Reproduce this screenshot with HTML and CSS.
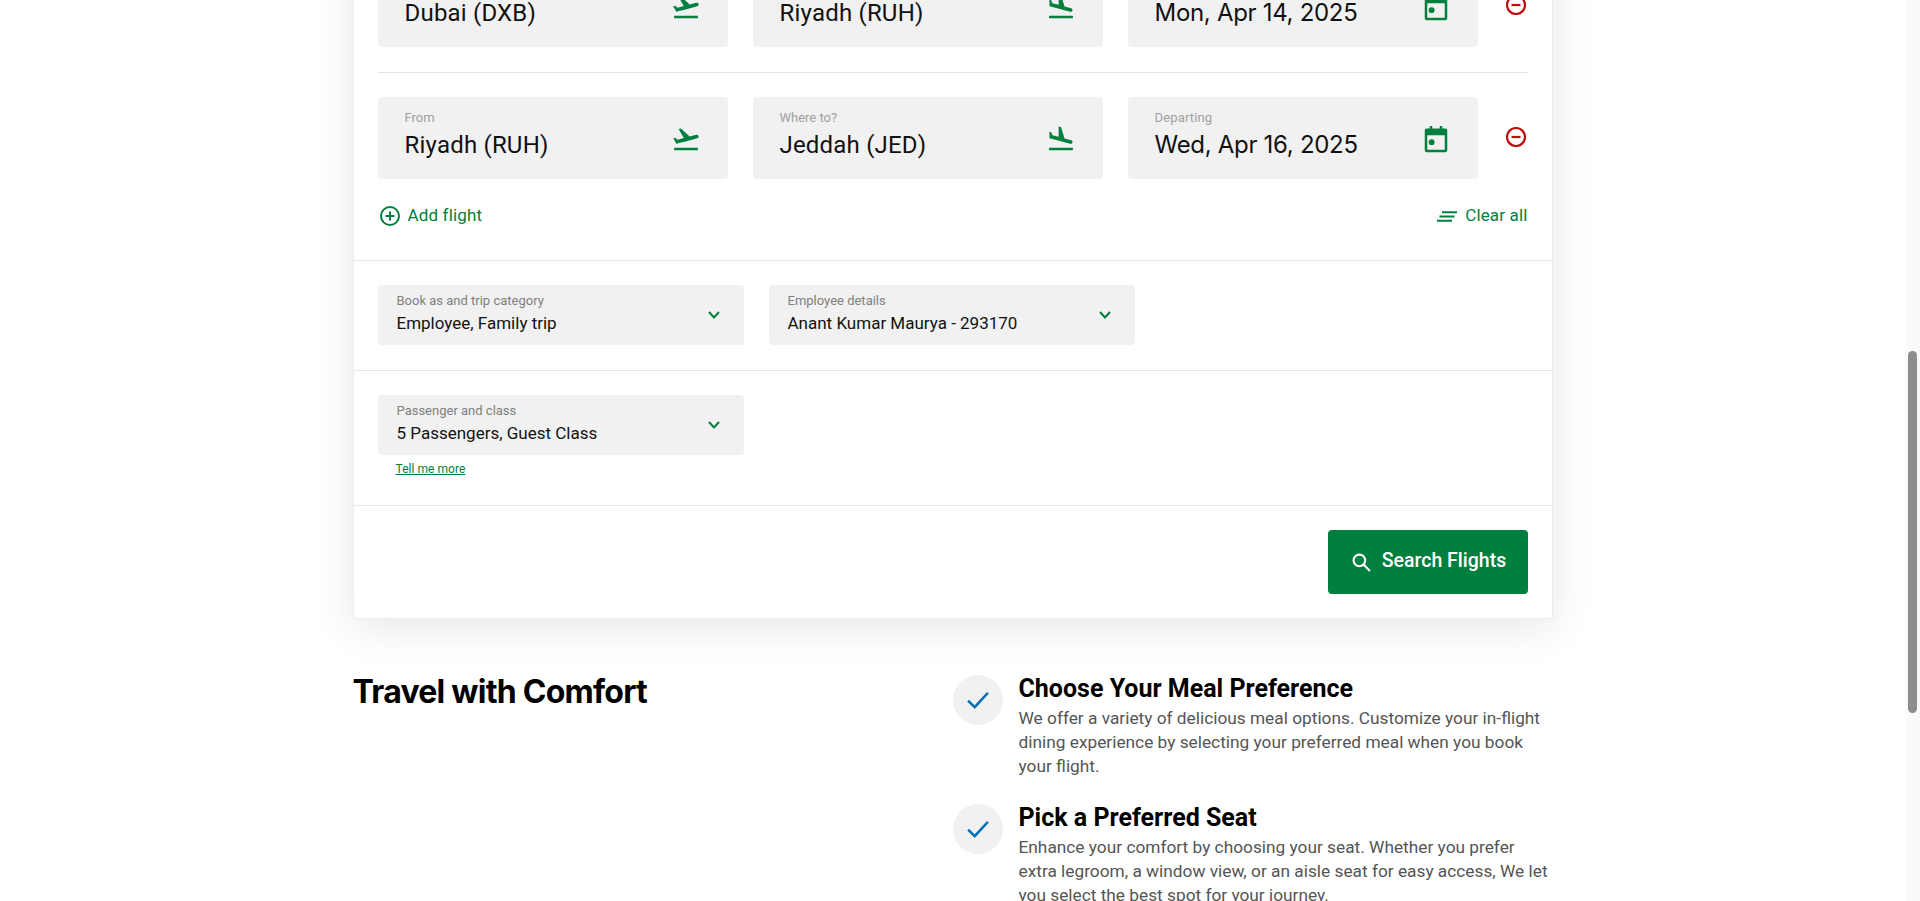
FILE: index.html
```html
<!DOCTYPE html>
<html lang="en">
<head>
    <meta charset="UTF-8">
    <meta name="viewport" content="width=device-width, initial-scale=1.0">
    <title>Book a flight</title>
    <link rel="stylesheet" href="styles.css">
</head>
<body>
    <div class="page">
        <main class="main">
            <div class="container">
                <form class="card">
                    <section class="routes">
                        <div class="route">
                            <div class="field">
                                <div class="field-text"><span class="field-label">From</span><span class="field-value">Dubai (DXB)</span></div>
                                <svg class="icon-plane" viewBox="0 0 24 24"><path d="M2.5 19h19v2h-19v-2zm19.57-9.36c-.21-.8-1.04-1.28-1.84-1.06L14.92 10l-6.9-6.43-1.93.51 4.14 7.17-4.97 1.33-1.97-1.54-1.45.39 2.59 4.49s7.12-1.9 16.57-4.43c.81-.23 1.28-1.05 1.07-1.85z"/></svg>
                            </div>
                            <div class="field">
                                <div class="field-text"><span class="field-label">Where to?</span><span class="field-value">Riyadh (RUH)</span></div>
                                <svg class="icon-plane" viewBox="0 0 24 24"><path d="M2.5 19h19v2h-19v-2zm7.18-5.73l4.35 1.16 5.31 1.42c.8.21 1.62-.26 1.84-1.06.21-.8-.26-1.62-1.06-1.84l-5.31-1.42-2.76-9.02L10.12 2v8.28L5.15 8.95l-.93-2.32-1.45-.39v5.17l1.6.43 5.31 1.43z"/></svg>
                            </div>
                            <div class="field">
                                <div class="field-text"><span class="field-label date-label">Departing</span><span class="field-value date-value">Mon, Apr 14, 2025</span></div>
                                <svg class="icon-plane" viewBox="0 0 24 24"><path d="M7 1.5h2V3.5h6V1.500h2V3.500h2.500A1.500 1.500 0 0 1 21 5v16a1.500 1.500 0 0 1-1.500 1.500h-15A1.500 1.500 0 0 1 3 21V5a1.500 1.500 0 0 1 1.500-1.500H7zM5 9v11.500h14V9z"/><circle cx="8.500" cy="14.500" r="2.300"/></svg>
                            </div>
                            <button type="button" class="remove"><svg viewBox="0 0 20 20"><circle cx="10" cy="10" r="9"/><path d="M5.500 10h9"/></svg></button>
                        </div>
                        <div class="route">
                            <div class="field">
                                <div class="field-text"><span class="field-label">From</span><span class="field-value">Riyadh (RUH)</span></div>
                                <svg class="icon-plane" viewBox="0 0 24 24"><path d="M2.5 19h19v2h-19v-2zm19.57-9.36c-.21-.8-1.04-1.28-1.84-1.06L14.92 10l-6.9-6.43-1.93.51 4.14 7.17-4.97 1.33-1.97-1.54-1.45.39 2.59 4.49s7.12-1.9 16.57-4.43c.81-.23 1.28-1.05 1.07-1.85z"/></svg>
                            </div>
                            <div class="field">
                                <div class="field-text"><span class="field-label">Where to?</span><span class="field-value">Jeddah (JED)</span></div>
                                <svg class="icon-plane" viewBox="0 0 24 24"><path d="M2.5 19h19v2h-19v-2zm7.18-5.73l4.35 1.16 5.31 1.42c.8.21 1.62-.26 1.84-1.06.21-.8-.26-1.62-1.06-1.84l-5.31-1.42-2.76-9.02L10.12 2v8.28L5.15 8.95l-.93-2.32-1.45-.39v5.17l1.6.43 5.31 1.43z"/></svg>
                            </div>
                            <div class="field">
                                <div class="field-text"><span class="field-label date-label">Departing</span><span class="field-value date-value">Wed, Apr 16, 2025</span></div>
                                <svg class="icon-plane" viewBox="0 0 24 24"><path d="M7 1.5h2V3.5h6V1.500h2V3.500h2.500A1.500 1.500 0 0 1 21 5v16a1.500 1.500 0 0 1-1.500 1.500h-15A1.500 1.500 0 0 1 3 21V5a1.500 1.500 0 0 1 1.500-1.500H7zM5 9v11.500h14V9z"/><circle cx="8.500" cy="14.500" r="2.300"/></svg>
                            </div>
                            <button type="button" class="remove"><svg viewBox="0 0 20 20"><circle cx="10" cy="10" r="9"/><path d="M5.500 10h9"/></svg></button>
                        </div>
                        <div class="route-actions">
                            <a class="action add-flight"><svg viewBox="0 0 20 20"><circle cx="10" cy="10" r="9"/><path d="M5.500 10h9M10 5.500v9"/></svg><span>Add flight</span></a>
                            <a class="action clear-all"><svg viewBox="0 0 20 11"><path d="M5 1.200h15M2.500 5.500h15M0 9.800h15"/></svg><span>Clear all</span></a>
                        </div>
                    </section>

                    <section class="options">
                        <div class="select">
                            <div class="field-text"><span class="select-label">Book as and trip category</span><span class="select-value">Employee, Family trip</span></div>
                            <svg class="chevron" viewBox="0 0 12 8"><path d="M1 1l5 5.500 5-5.500"/></svg>
                        </div>
                        <div class="select">
                            <div class="field-text"><span class="select-label">Employee details</span><span class="select-value">Anant Kumar Maurya - 293170</span></div>
                            <svg class="chevron" viewBox="0 0 12 8"><path d="M1 1l5 5.500 5-5.500"/></svg>
                        </div>
                    </section>

                    <section class="options passengers">
                        <div class="select">
                            <div class="field-text"><span class="select-label">Passenger and class</span><span class="select-value">5 Passengers, Guest Class</span></div>
                            <svg class="chevron" viewBox="0 0 12 8"><path d="M1 1l5 5.500 5-5.500"/></svg>
                        </div>
                        <a class="tell-more">Tell me more</a>
                    </section>

                    <section class="submit-row">
                        <button type="button" class="search-btn"><svg viewBox="0 0 18 18"><circle cx="7" cy="7" r="5.500"/><path d="M11 11l6 6"/></svg><span>Search Flights</span></button>
                    </section>
                </form>

                <section class="comfort">
                    <h2>Travel with Comfort</h2>
                    <div class="benefits">
                        <div class="benefit">
                            <span class="tick"><svg viewBox="0 0 20 16"><path d="M1 8.500l6 6L19 1.500"/></svg></span>
                            <div>
                                <h3>Choose Your Meal Preference</h3>
                                <p>We offer a variety of delicious meal options. Customize your in-flight dining experience by selecting your preferred meal when you book your flight.</p>
                            </div>
                        </div>
                        <div class="benefit">
                            <span class="tick"><svg viewBox="0 0 20 16"><path d="M1 8.500l6 6L19 1.500"/></svg></span>
                            <div>
                                <h3>Pick a Preferred Seat</h3>
                                <p>Enhance your comfort by choosing your seat. Whether you prefer extra legroom, a window view, or an aisle seat for easy access, We let you select the best spot for your journey.</p>
                            </div>
                        </div>
                    </div>
                </section>
            </div>
        </main>
        <div class="scrollbar"><div class="scrollbar-thumb"></div></div>
    </div>
</body>
</html>
```

FILE: styles.css
```css
* {
    box-sizing: border-box;
}
body {
    font-family: Roboto, Arial, sans-serif;
    margin: 0;
    background-color: white;
    color: #111;
}
.page {
    display: flex;
    height: 901px;
    overflow: hidden;
}
.main {
    flex: 1;
    min-width: 0;
}
.container {
    width: 1200px;
    margin: -60px auto 0;
}
.card {
    background: white;
    border: 1px solid #ececec;
    box-shadow: 0 8px 40px rgba(0, 0, 0, 0.1);
}
.routes {
    padding: 24px 24px 0;
}
.route {
    display: flex;
    align-items: center;
    gap: 25px;
    padding-bottom: 25px;
    margin-bottom: 24px;
    border-bottom: 1px solid #e5e5e5;
}
.route:nth-child(2) {
    border-bottom: none;
    padding-bottom: 0;
    margin-bottom: 0;
}
.field {
    width: 350px;
    height: 82px;
    display: flex;
    align-items: center;
    justify-content: space-between;
    padding: 0 27px;
    background-color: #f1f1f1;
    border-radius: 4px;
    color: #007f3e;
}
.field-text {
    display: flex;
    flex-direction: column;
}
.field .field-text {
    padding-bottom: 5px;
}
.field-label {
    font-size: 13px;
    line-height: 14px;
    color: #a0a0a0;
}
.field-value {
    font-size: 24px;
    line-height: 30px;
    margin-top: 5px;
    color: #111;
    letter-spacing: 0.2px;
}
.date-label {
    letter-spacing: 0.15px;
}
.date-value {
    font-family: Inter, Arial, sans-serif;
    font-size: 24px;
    letter-spacing: -0.3px;
}
.icon-plane {
    width: 30px;
    height: 30px;
    fill: #007f3e;
    flex: none;
    margin-top: 2px;
}
.remove {
    width: 25px;
    height: 20px;
    margin-left: auto;
    margin-top: -2px;
    padding: 0;
    border: none;
    background: none;
    display: flex;
    justify-content: flex-end;
}
.remove svg {
    width: 20px;
    height: 20px;
    margin-right: 2px;
    fill: none;
    stroke: #c00d0d;
    stroke-width: 2.2;
}
.route-actions {
    display: flex;
    justify-content: space-between;
    align-items: center;
    height: 24px;
    margin-top: 25px;
    margin-bottom: 32px;
}
.action {
    display: flex;
    align-items: center;
    font-size: 17px;
    letter-spacing: 0.15px;
    color: #007f3e;
}
.action span {
    padding-bottom: 2px;
}
.add-flight svg {
    width: 20px;
    height: 20px;
    margin: 0 8px 0 2px;
    fill: none;
    stroke: #007f3e;
    stroke-width: 2;
}
.clear-all svg {
    width: 20px;
    height: 11px;
    margin-right: 8px;
    fill: none;
    stroke: #007f3e;
    stroke-width: 2;
}
.options {
    display: flex;
    flex-wrap: wrap;
    gap: 25px;
    padding: 24px 24px 25px;
    border-top: 1px solid #e5e5e5;
}
.select {
    width: 366px;
    height: 60px;
    display: flex;
    align-items: center;
    justify-content: space-between;
    padding: 0 24px 0 19px;
    background-color: #f1f1f1;
    border-radius: 4px;
}
.select .field-text {
    padding-bottom: 3px;
}
.select-label {
    font-size: 13px;
    line-height: 14px;
    color: #808080;
}
.select-value {
    font-size: 17px;
    line-height: 20px;
    margin-top: 5px;
}
.chevron {
    width: 12px;
    height: 8px;
    margin-top: -1px;
    fill: none;
    stroke: #007f3e;
    stroke-width: 2;
}
.passengers {
    flex-direction: column;
    gap: 3px;
    padding-bottom: 25px;
}
.tell-more {
    margin-left: 18px;
    font-size: 12px;
    line-height: 22px;
    letter-spacing: 0.05px;
    color: #007f3e;
    text-decoration: underline;
}
.submit-row {
    display: flex;
    justify-content: flex-end;
    padding: 24px;
    border-top: 1px solid #e5e5e5;
}
.search-btn {
    width: 200px;
    height: 64px;
    display: flex;
    align-items: center;
    justify-content: center;
    gap: 11px;
    padding: 0 0 0 3px;
    background-color: #007f3e;
    color: white;
    border: none;
    border-radius: 4px;
    font-family: inherit;
    font-size: 19.5px;
    font-weight: 500;
}
.search-btn span {
    padding-bottom: 4px;
}
.search-btn svg {
    width: 19px;
    height: 19px;
    fill: none;
    stroke: white;
    stroke-width: 2;
}
.comfort {
    display: grid;
    grid-template-columns: 600px 600px;
    margin-top: 56px;
}
.comfort h2 {
    margin: 0;
    font-family: Inter, Arial, sans-serif;
    font-size: 32px;
    line-height: 33px;
    font-weight: 700;
    letter-spacing: -0.75px;
    color: #000;
}
.benefits {
    display: flex;
    flex-direction: column;
    gap: 26px;
}
.benefit {
    display: flex;
    gap: 16px;
}
.tick {
    width: 50px;
    height: 50px;
    flex: none;
    display: flex;
    align-items: center;
    justify-content: center;
    background-color: #f1f1f1;
    border-radius: 50%;
}
.tick svg {
    width: 22px;
    height: 18px;
    fill: none;
    stroke: #0072b5;
    stroke-width: 2.3;
}
.benefit h3 {
    margin: 0;
    font-size: 25px;
    line-height: 28px;
    font-weight: 700;
    color: #000;
}
.benefit p {
    margin: 3px 0 0;
    font-size: 17.3px;
    line-height: 24px;
    color: #555;
}
.scrollbar {
    position: relative;
    width: 15px;
    flex: none;
    background-color: #fafafa;
}
.scrollbar-thumb {
    position: absolute;
    top: 351px;
    left: 3px;
    width: 9px;
    height: 362px;
    background-color: #8d8d8d;
    border-radius: 5px;
}
```
